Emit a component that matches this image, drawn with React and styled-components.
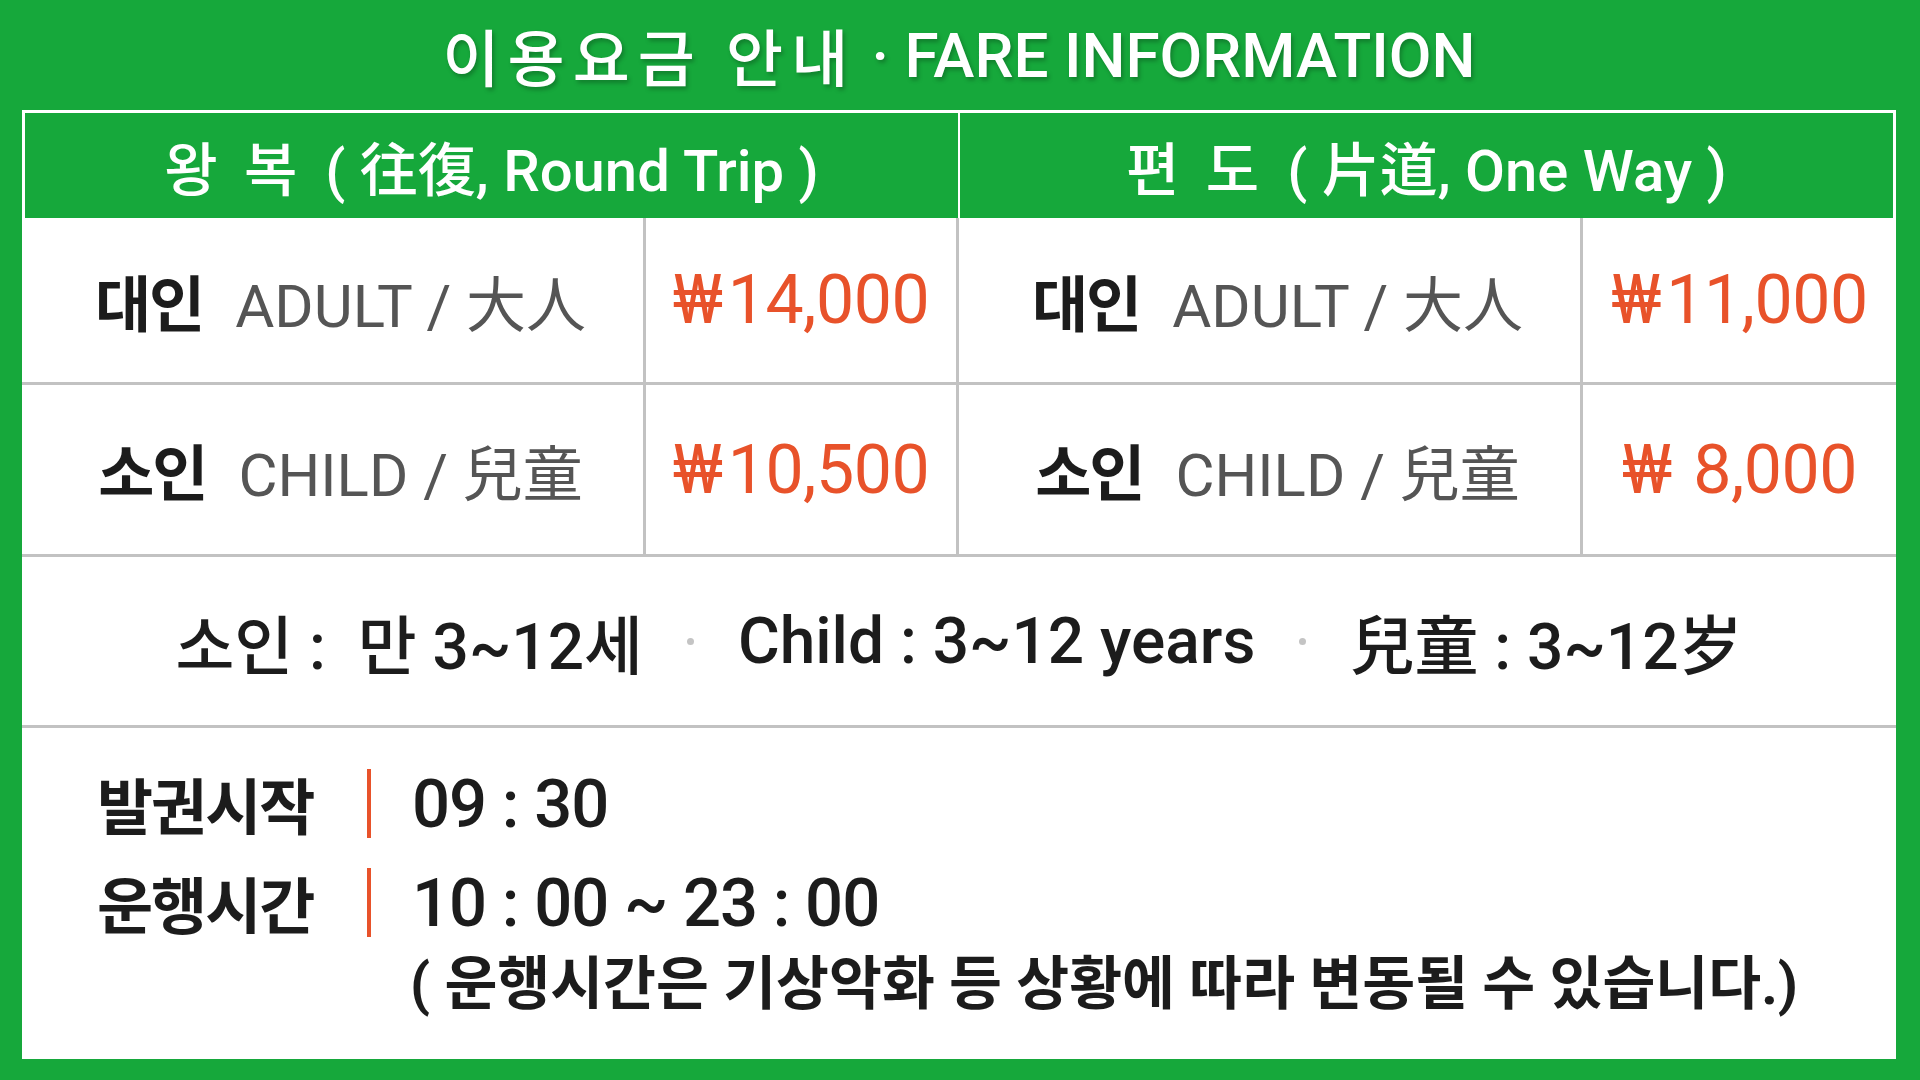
import React from "react";
import styled, { createGlobalStyle } from "styled-components";

const GREEN = "#16a83b";
const ORANGE = "#e8522a";
const LINE = "#c2c2c2";
const INK = "#1c1c1c";

const GlobalStyle = createGlobalStyle`
  html, body {
    margin: 0;
    padding: 0;
  }
  body {
    background: ${GREEN};
    font-family: Roboto, "Noto Sans CJK KR", sans-serif;
  }
`;

const Board = styled.div`
  width: 1920px;
  height: 1080px;
  box-sizing: border-box;
  padding: 0 24px 21px 22px;
  background: ${GREEN};
  display: flex;
  flex-direction: column;
`;

const Title = styled.h1`
  margin: 0;
  height: 110px;
  display: flex;
  align-items: center;
  justify-content: center;
  color: #fff;
  font-size: 62px;
  font-weight: 500;
  text-shadow: 2px 3px 4px rgba(0, 0, 0, 0.25);
  white-space: pre;
`;

const TitleKo = styled.span`
  letter-spacing: 8px;
`;

const Panel = styled.div`
  flex: 1;
  background: #fff;
  display: flex;
  flex-direction: column;
`;

const Header = styled.div`
  height: 105px;
  margin: 3px 3px 0;
  background: ${GREEN};
  display: flex;
`;

const HeaderCell = styled.div`
  flex: 1;
  display: flex;
  align-items: center;
  justify-content: center;
  color: #fff;
  font-size: 58px;
  font-weight: 500;
  white-space: pre;
  & + & {
    border-left: 2px solid #fff;
  }
`;

const HeadKo = styled.span`
  letter-spacing: 6px;
  margin-right: 22px;
`;

const FareGrid = styled.div`
  display: grid;
  grid-template-columns: 624px 313px 624px 313px;
  grid-template-rows: 167px 172px;
`;

const Cell = styled.div`
  box-sizing: border-box;
  display: flex;
  align-items: center;
  justify-content: center;
  padding-left: ${(p) => (p.$label ? "16px" : "0")};
  border-bottom: 3px solid ${LINE};
  border-right: ${(p) => (p.$last ? "none" : `3px solid ${LINE}`)};
  white-space: pre;
`;

const Who = styled.span`
  font-size: 61px;
  font-weight: 700;
  color: ${INK};
  letter-spacing: -2px;
  margin-right: 32px;
`;

const Kind = styled.span`
  font-size: 60px;
  color: #555;
`;

const Price = styled.span`
  font-size: 68px;
  color: ${ORANGE};
  letter-spacing: -0.5px;
`;

const Won = styled.span`
  margin-right: 5px;
`;

const AgeRow = styled.div`
  box-sizing: border-box;
  height: 171px;
  border-bottom: 3px solid ${LINE};
  display: flex;
  align-items: center;
  justify-content: center;
  font-size: 64px;
  font-weight: 500;
  color: ${INK};
  white-space: pre;
`;

const Dot = styled.span`
  width: 7px;
  height: 7px;
  border-radius: 50%;
  background: #c4c4c4;
  margin: 0 44px;
`;

const Hours = styled.div`
  flex: 1;
  padding: 26px 0 0 75px;
  color: ${INK};
`;

const HourLine = styled.div`
  height: 99px;
  display: flex;
  align-items: center;
`;

const HourLabel = styled.span`
  width: 270px;
  font-size: 61px;
  font-weight: 700;
  letter-spacing: -2px;
`;

const Bar = styled.span`
  width: 4px;
  height: 69px;
  background: ${ORANGE};
  margin-right: 41px;
`;

const HourValue = styled.span`
  font-size: 67px;
  font-weight: 500;
  letter-spacing: -1px;
  white-space: pre;
`;

const Note = styled.div`
  padding-left: 313px;
  font-size: 57.5px;
  font-weight: 700;
  line-height: 66px;
  white-space: pre;
`;

const fares = [
  { who: "대인", kind: "ADULT / 大人", round: "14,000", oneway: "11,000" },
  { who: "소인", kind: "CHILD / 兒童", round: "10,500", oneway: " 8,000" },
];

export default function App() {
  return (
    <>
      <GlobalStyle />
      <Board>
        <Title>
          <TitleKo>이용요금 안내</TitleKo> · FARE INFORMATION
        </Title>
        <Panel>
          <Header>
            <HeaderCell>
              <HeadKo>왕 복</HeadKo>( 往復, Round Trip )
            </HeaderCell>
            <HeaderCell>
              <HeadKo>편 도</HeadKo>( 片道, One Way )
            </HeaderCell>
          </Header>
          <FareGrid>
            {fares.map((f) => (
              <React.Fragment key={f.who}>
                <Cell $label>
                  <Who>{f.who}</Who>
                  <Kind>{f.kind}</Kind>
                </Cell>
                <Cell>
                  <Price>
                    <Won>₩</Won>
                    {f.round}
                  </Price>
                </Cell>
                <Cell $label>
                  <Who>{f.who}</Who>
                  <Kind>{f.kind}</Kind>
                </Cell>
                <Cell $last>
                  <Price>
                    <Won>₩</Won>
                    {f.oneway}
                  </Price>
                </Cell>
              </React.Fragment>
            ))}
          </FareGrid>
          <AgeRow>
            소인 :  만 3~12세
            <Dot />
            Child : 3~12 years
            <Dot />
            兒童 : 3~12岁
          </AgeRow>
          <Hours>
            <HourLine>
              <HourLabel>발권시작</HourLabel>
              <Bar />
              <HourValue>09 : 30</HourValue>
            </HourLine>
            <HourLine>
              <HourLabel>운행시간</HourLabel>
              <Bar />
              <HourValue>10 : 00 ~ 23 : 00</HourValue>
            </HourLine>
            <Note>( 운행시간은 기상악화 등 상황에 따라 변동될 수 있습니다.)</Note>
          </Hours>
        </Panel>
      </Board>
    </>
  );
}
